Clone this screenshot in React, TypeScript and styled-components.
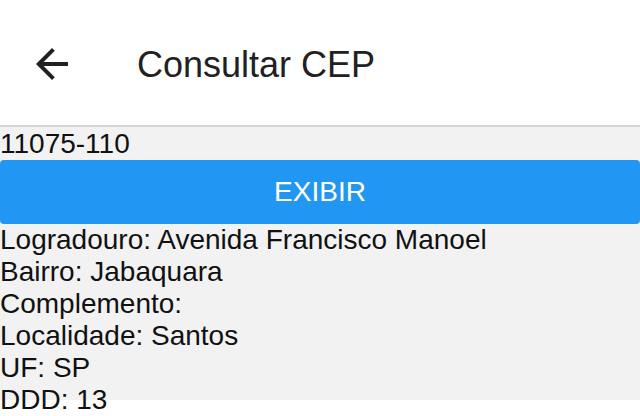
import React from "react";
import styled, { createGlobalStyle } from "styled-components";

const GlobalStyle = createGlobalStyle`
    html, body {
        margin: 0;
        padding: 0;
        background: #ffffff;
        font-family: "Liberation Sans", Arial, sans-serif;
    }
`;

const Screen = styled.div`
    width: 640px;
    height: 416px;
    overflow: hidden;
    background: #ffffff;
`;

const Header = styled.header`
    height: 125px;
    display: flex;
    align-items: center;
    border-bottom: 2px solid #d6d6d6;
    background: #ffffff;
`;

const BackButton = styled.button`
    width: 48px;
    height: 48px;
    margin: 2px 0 0 28px;
    padding: 0;
    border: none;
    background: none;
    display: flex;
    align-items: center;
    justify-content: center;
    color: #212121;
`;

const Title = styled.h1`
    margin: 4px 0 0 61px;
    font-size: 36px;
    font-weight: 400;
    color: #212121;
`;

const Body = styled.main`
    height: 273px;
    padding-top: 1px;
    box-sizing: border-box;
    background: #f2f2f2;
    font-size: 28px;
    line-height: normal;
    color: #111111;
`;

const CepText = styled.div``;

const ShowButton = styled.button`
    display: block;
    width: 100%;
    height: 64px;
    border: none;
    border-radius: 4px;
    background: #2196f3;
    color: #ffffff;
    font-family: "Liberation Sans", Arial, sans-serif;
    font-size: 28px;
    text-transform: uppercase;
    padding: 0;
`;

const InfoLine = styled.div``;

const fields: [string, string][] = [
    ["Logradouro", "Avenida Francisco Manoel"],
    ["Bairro", "Jabaquara"],
    ["Complemento", ""],
    ["Localidade", "Santos"],
    ["UF", "SP"],
    ["DDD", "13"],
];

export default function App() {
    return (
        <Screen>
            <GlobalStyle />
            <Header>
                <BackButton aria-label="Voltar">
                    <svg width="48" height="48" viewBox="0 0 24 24" fill="currentColor">
                        <path d="M20 11H7.83l5.59-5.59L12 4l-8 8 8 8 1.41-1.41L7.83 13H20v-2z" />
                    </svg>
                </BackButton>
                <Title>Consultar CEP</Title>
            </Header>
            <Body>
                <CepText>11075-110</CepText>
                <ShowButton>Exibir</ShowButton>
                {fields.map(([label, value]) => (
                    <InfoLine key={label}>
                        {label}: {value}
                    </InfoLine>
                ))}
            </Body>
        </Screen>
    );
}
